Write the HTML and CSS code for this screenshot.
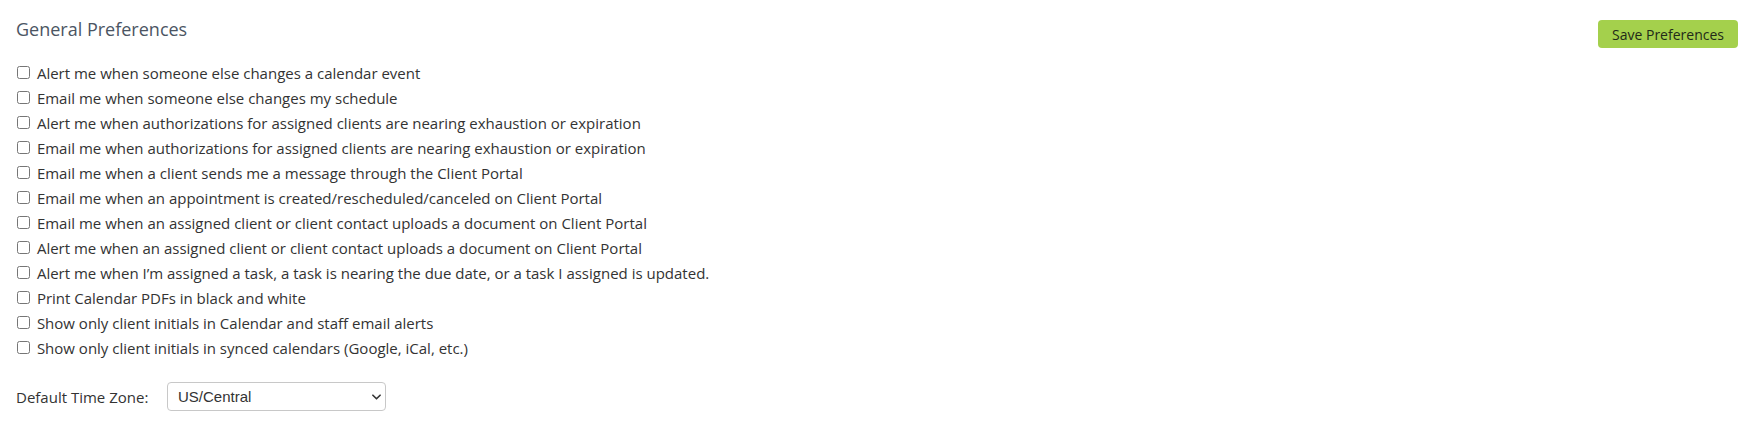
FILE: index.html
```html
<!DOCTYPE html>
<html lang="en">
<head>
  <meta charset="UTF-8" />
  <title>General Preferences</title>
  <link rel="stylesheet" href="styles.css">
</head>
<body>
  <div class="prefs">
    <div class="prefs-header">
      <h2>General Preferences</h2>
      <button type="button" class="save-btn">Save Preferences</button>
    </div>

    <div class="pref-list">
      <label class="pref"><input type="checkbox"> Alert me when someone else changes a calendar event</label>
      <label class="pref"><input type="checkbox"> Email me when someone else changes my schedule</label>
      <label class="pref"><input type="checkbox"> Alert me when authorizations for assigned clients are nearing exhaustion or expiration</label>
      <label class="pref"><input type="checkbox"> Email me when authorizations for assigned clients are nearing exhaustion or expiration</label>
      <label class="pref"><input type="checkbox"> Email me when a client sends me a message through the Client Portal</label>
      <label class="pref"><input type="checkbox"> Email me when an appointment is created/rescheduled/canceled on Client Portal</label>
      <label class="pref"><input type="checkbox"> Email me when an assigned client or client contact uploads a document on Client Portal</label>
      <label class="pref"><input type="checkbox"> Alert me when an assigned client or client contact uploads a document on Client Portal</label>
      <label class="pref"><input type="checkbox"> Alert me when I’m assigned a task, a task is nearing the due date, or a task I assigned is updated.</label>
      <label class="pref"><input type="checkbox"> Print Calendar PDFs in black and white</label>
      <label class="pref"><input type="checkbox"> Show only client initials in Calendar and staff email alerts</label>
      <label class="pref"><input type="checkbox"> Show only client initials in synced calendars (Google, iCal, etc.)</label>
    </div>

    <div class="tz-row">
      <label for="timezone" class="tz-label">Default Time Zone:</label>
      <div class="select-wrap">
        <select id="timezone">
          <option>US/Eastern</option>
          <option selected>US/Central</option>
          <option>US/Mountain</option>
          <option>US/Pacific</option>
        </select>
        <svg class="select-arrow" viewBox="0 0 10 6" fill="none">
          <path d="M1 1L5 5L9 1" stroke="#333" stroke-width="1.8" stroke-linecap="round" stroke-linejoin="round"/>
        </svg>
      </div>
    </div>
  </div>
</body>
</html>
```

FILE: styles.css
```css
* {
  box-sizing: border-box;
}

body {
  margin: 0;
  font-family: 'Open Sans', 'Liberation Sans', sans-serif;
  font-size: 15px;
  color: #333;
  background: #fff;
}

.prefs {
  padding: 17px 18px 0 16px;
}

.prefs-header {
  display: flex;
  justify-content: space-between;
  align-items: flex-start;
}

h2 {
  margin: 0;
  font-size: 18px;
  font-weight: 400;
  color: #4b5563;
}

.save-btn {
  margin-top: 3px;
  width: 140px;
  height: 28px;
  background: #a4d04c;
  color: #222a18;
  border: none;
  border-radius: 4px;
  font-family: inherit;
  font-size: 14px;
  font-weight: 500;
  cursor: pointer;
}

.save-btn:hover {
  background: #96c53d;
}

.pref-list {
  margin-top: 12px;
  display: flex;
  flex-direction: column;
}

.pref {
  display: flex;
  align-items: center;
  height: 25px;
  white-space: pre;
}

.pref input {
  width: 13px;
  height: 13px;
  margin: 0 3px 0 1px;
}

.tz-row {
  display: flex;
  align-items: center;
  margin-top: 22px;
}

.tz-label {
  width: 151px;
}

.select-wrap {
  position: relative;
}

select {
  appearance: none;
  width: 219px;
  height: 29px;
  padding: 0 24px 0 10px;
  border: 1px solid #c8c8c8;
  border-radius: 4px;
  background: #fff;
  font-family: 'Liberation Sans', Arial, sans-serif;
  font-size: 15px;
  color: #333;
}

.select-arrow {
  position: absolute;
  right: 5px;
  top: 12px;
  width: 9px;
  height: 6px;
  pointer-events: none;
}
```
